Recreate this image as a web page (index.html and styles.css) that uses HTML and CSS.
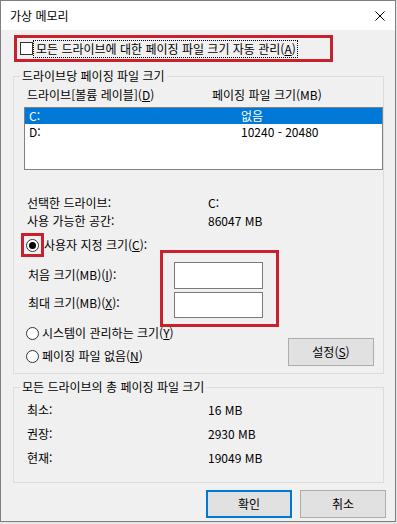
FILE: index.html
```html
<!DOCTYPE html>
<html lang="ko">
<head>
<meta charset="utf-8">
<title>가상 메모리</title>
<link rel="stylesheet" href="styles.css">
</head>
<body>
<div class="window">
  <div class="titlebar">
    <span class="title">가상 메모리</span>
    <svg class="close" viewBox="0 0 10 10" width="10" height="10"><path d="M0.5 0.5 L9.5 9.5 M9.5 0.5 L0.5 9.5" stroke="#000" stroke-width="1" fill="none"/></svg>
  </div>
  <div class="content">
    <div class="auto-hl">
      <span class="checkbox"></span>
      <span class="focus">모든 드라이브에 대한 페이징 파일 크기 자동 관리(<u>A</u>)</span>
    </div>

    <fieldset class="group g1">
      <legend>드라이브당 페이징 파일 크기</legend>
      <div class="list-header">
        <span class="hc1">드라이브[볼륨 레이블](<u>D</u>)</span>
        <span>페이징 파일 크기(MB)</span>
      </div>
      <div class="listbox">
        <div class="list-row selected"><span class="lc1">C:</span><span>없음</span></div>
        <div class="list-row"><span class="lc1">D:</span><span>10240 - 20480</span></div>
      </div>
      <div class="info">
        <span>선택한 드라이브:</span><span>C:</span>
        <span>사용 가능한 공간:</span><span>86047 MB</span>
      </div>
      <div class="custom-row">
        <span class="radio-hl"><span class="radio checked"></span></span>
        <span>사용자 지정 크기(<u>C</u>):</span>
      </div>
      <div class="size-area">
        <div class="size-labels">
          <span>처음 크기(MB)(<u>I</u>):</span>
          <span class="second">최대 크기(MB)(<u>X</u>):</span>
        </div>
        <div class="inputs-hl">
          <span class="textbox tb1"></span>
          <span class="textbox tb2"></span>
        </div>
      </div>
      <div class="bottom-area">
        <div class="radios">
          <div class="radio-row"><span class="radio"></span><span>시스템이 관리하는 크기(<u>Y</u>)</span></div>
          <div class="radio-row"><span class="radio"></span><span>페이징 파일 없음(<u>N</u>)</span></div>
        </div>
        <span class="btn btn-set">설정(<u>S</u>)</span>
      </div>
    </fieldset>

    <fieldset class="group g2">
      <legend>모든 드라이브의 총 페이징 파일 크기</legend>
      <div class="totals">
        <span>최소:</span><span>16 MB</span>
        <span>권장:</span><span>2930 MB</span>
        <span>현재:</span><span>19049 MB</span>
      </div>
    </fieldset>

    <div class="buttons">
      <span class="btn btn-default">확인</span>
      <span class="btn">취소</span>
    </div>
  </div>
</div>
</body>
</html>
```
FILE: styles.css
```css
* { box-sizing: border-box; }
html, body { margin: 0; padding: 0; }
body {
  width: 397px;
  height: 524px;
  overflow: hidden;
  background: #e6e6e6;
  font-family: "Noto Sans CJK KR", "Noto Sans", sans-serif;
  font-size: 12px;
  line-height: 16px;
  color: #000;
}
u { text-decoration: underline; text-underline-offset: 1px; }

.window {
  width: 396px;
  height: 522px;
  border: 1px solid #7f7f7f;
  background: #f0f0f0;
  display: flex;
  flex-direction: column;
}
.titlebar {
  height: 29px;
  flex: none;
  background: #fff;
  display: flex;
  align-items: center;
  padding-left: 9px;
}
.title { flex: 1; }
.close { display: block; margin-right: 10px; }

.content {
  flex: 1;
  padding: 5px 11px 0 12px;
  display: flex;
  flex-direction: column;
}

.auto-hl {
  display: flex;
  align-items: center;
  width: 319px;
  height: 27px;
  margin-left: 1px;
  padding-left: 3px;
  border: 3px solid #c8202f;
}
.checkbox {
  width: 13px;
  height: 13px;
  flex: none;
  border: 1px solid #333;
  background: #fff;
}
.focus {
  border: 1px dotted #000;
  padding: 0 1px 0 2px;
  line-height: 16px;
}

.group {
  margin: 0;
  padding: 0;
  min-width: 0;
  border: 1px solid #dcdcdc;
}
.group legend {
  padding: 0 2px;
  margin-left: 6px;
  line-height: 16px;
}
.g1 { margin-top: 6px; padding-bottom: 7px; }
.g2 { margin-top: 5px; padding-bottom: 12px; }

.list-header {
  display: flex;
  height: 16px;
  margin: 3px 0 0 13px;
}
.hc1 { width: 185px; }

.listbox {
  width: 359px;
  height: 63px;
  margin: 4px 0 0 10px;
  border: 1px solid #828282;
  background: #fff;
}
.list-row {
  display: flex;
  height: 16px;
  line-height: 16px;
  padding-left: 4px;
}
.list-row.selected { background: #0078d7; color: #fff; }
.lc1 { width: 212px; }

.info, .totals {
  display: grid;
  grid-template-columns: 181px auto;
  margin-left: 13px;
}
.info { margin-top: 24px; grid-auto-rows: 18px; line-height: 18px; }
.totals { margin-top: 3px; grid-auto-rows: 24px; line-height: 24px; }

.custom-row {
  display: flex;
  align-items: center;
  height: 24px;
  margin: 3px 0 0 7px;
}
.radio-hl {
  width: 23px;
  height: 24px;
  border: 3px solid #c8202f;
  display: flex;
  align-items: center;
  justify-content: center;
}
.radio {
  width: 13px;
  height: 13px;
  flex: none;
  border: 1px solid #333;
  border-radius: 50%;
  background: #fff;
  display: flex;
  align-items: center;
  justify-content: center;
}
.radio.checked::after {
  content: "";
  width: 7px;
  height: 7px;
  border-radius: 50%;
  background: #000;
}

.size-area {
  display: flex;
  margin-top: -7px;
}
.size-labels {
  width: 146px;
  padding: 17px 0 0 14px;
  display: flex;
  flex-direction: column;
}
.size-labels .second { margin-top: 12px; }
.inputs-hl {
  width: 119px;
  height: 77px;
  border: 3px solid #c8202f;
  padding: 9px 0 0 11px;
  display: flex;
  flex-direction: column;
  gap: 3px;
}
.textbox {
  display: block;
  width: 89px;
  border: 1px solid #7a7a7a;
  background: #fff;
}
.tb1 { height: 27px; }
.tb2 { height: 26px; }

.bottom-area {
  display: flex;
  margin-top: -4px;
  padding-right: 9px;
}
.radios {
  flex: 1;
  display: flex;
  flex-direction: column;
  gap: 3px;
  padding-left: 12px;
}
.radio-row {
  display: flex;
  align-items: center;
  gap: 3px;
  height: 20px;
}

.btn {
  display: flex;
  align-items: center;
  justify-content: center;
  width: 86px;
  height: 28px;
  background: #e1e1e1;
  border: 1px solid #adadad;
}
.btn-set { margin-top: 15px; }
.btn-default { border: 2px solid #0078d7; }

.buttons {
  display: flex;
  justify-content: flex-end;
  gap: 8px;
  margin: 7px -2px 0 0;
}
```
